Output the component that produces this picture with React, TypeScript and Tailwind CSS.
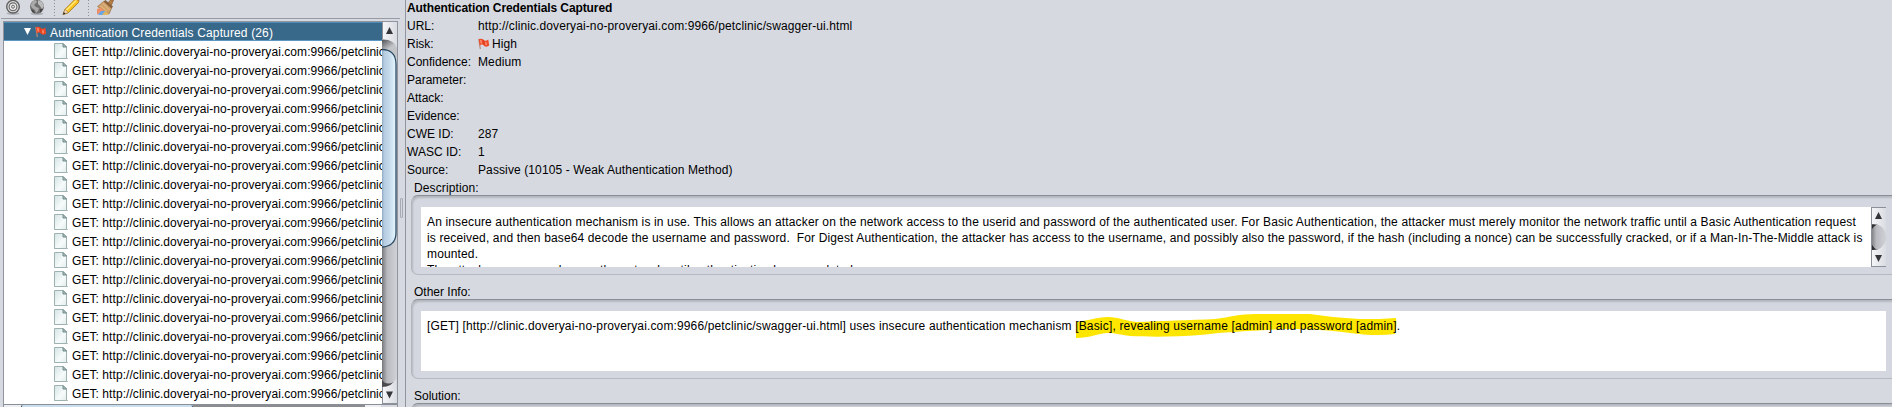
import React from "react";

const FONT = "font-['Liberation_Sans',Arial,sans-serif]";
const NODE = "GET: http://clinic.doveryai-no-proveryai.com:9966/petclinic";
const rows = Array.from({ length: 19 }, (_, i) => i);

const details: { label: string; value: string; flag?: boolean }[] = [
  { label: "URL:", value: "http://clinic.doveryai-no-proveryai.com:9966/petclinic/swagger-ui.html" },
  { label: "Risk:", value: "High", flag: true },
  { label: "Confidence:", value: "Medium" },
  { label: "Parameter:", value: "" },
  { label: "Attack:", value: "" },
  { label: "Evidence:", value: "" },
  { label: "CWE ID:", value: "287" },
  { label: "WASC ID:", value: "1" },
  { label: "Source:", value: "Passive (10105 - Weak Authentication Method)" },
];

function Flag() {
  return (
    <svg width="12" height="12" viewBox="0 0 12 12" className="shrink-0">
      <path d="M.8 .8L2.300 11" stroke="#b98a78" strokeWidth="1.200" />
      <path d="M.8 1.300C2.500 .3 4.200 .5 5.400 1.600L6.200 2.600C7.500 3 9 2.600 10.300 1.400L11.200 7.600C9.600 9 7.600 9 6.200 8L5.300 7C4 6.200 3 6.500 1.700 7.500Z" fill="#ee4a28" />
      <path d="M2.800 2L3.300 5.500M7.800 4.200L8.200 7.200" stroke="#ffa184" strokeWidth="1.200" />
      <path d="M5.500 2.200L6.100 7" stroke="#d23a1c" strokeWidth=".8" />
    </svg>
  );
}

function Page() {
  return (
    <svg width="14" height="17" viewBox="0 0 14 17" className="shrink-0">
      <defs>
        <linearGradient id="pg" x1="0" y1="0" x2="1" y2="1">
          <stop offset="0" stopColor="#d5e4e4" />
          <stop offset="0.6" stopColor="#f6fafa" />
          <stop offset="1" stopColor="#e2ecec" />
        </linearGradient>
      </defs>
      <path d="M0 15.5H14" stroke="#b9c2c2" />
      <path d="M.5 .5H9L12.5 4V15.5H.5Z" fill="url(#pg)" stroke="#9fb2b2" />
      <path d="M9 .5V4H12.5Z" fill="#b5c5c5" stroke="#6f8888" />
    </svg>
  );
}

function Toolbar() {
  return (
    <div className="ml-px flex h-[19px] w-[399px] items-start overflow-hidden border-b border-[#979ba5]">
      <svg width="130" height="18" viewBox="1 0 130 18">
        <ellipse cx="13" cy="13.500" rx="6.500" ry="1.500" fill="#aeb1b8" />
        <circle cx="13" cy="6.700" r="6.300" fill="#dedede" stroke="#606060" strokeWidth="1.400" />
        <circle cx="13" cy="6.700" r="3.900" fill="#ececec" stroke="#6c6c6c" strokeWidth="1.200" />
        <circle cx="13" cy="6.700" r="1.500" fill="#ddd" stroke="#6c6c6c" />
        <ellipse cx="37" cy="13.700" rx="6.500" ry="1.500" fill="#aeb1b8" />
        <circle cx="37" cy="6.700" r="7" fill="#6e6e6e" />
        <path d="M30.500 5L33 1L36 0L37 2L34 5L36 7L39 8L38 11L36 13L35 10L32 8Z" fill="#a9a9a9" />
        <path d="M38 0L42 2L44 6L42 9L40 6L38 4Z" fill="#bdbdbd" />
        <path d="M31 9L34 11L35 13.500L32 12ZM40 9L43 9L40 13Z" fill="#454545" />
        <path d="M54.500 0V16M88.500 0V16" stroke="#8c919c" strokeDasharray="1 2" />
        <path d="M63 14.500L64.800 9.500L74.300 0H79L78.500 2.500L68 13Z" fill="#f9c31f" stroke="#a87414" strokeWidth=".8" />
        <path d="M66.200 10.300L76.400 .2" stroke="#ffe97a" strokeWidth="1.500" />
        <path d="M63 14.500L65 9.300L68.300 12.600Z" fill="#f1d6b0" stroke="#8a6a40" strokeWidth=".5" />
        <path d="M63 14.500L63.800 12L65.500 13.700Z" fill="#222" />
        <path d="M107 4L110.500 0H113.500L112 4L110 6.500Z" fill="#b87f45" stroke="#805125" strokeWidth=".6" />
        <path d="M103.500 1.500L105.500 0L113 6.500L111.500 8.500Z" fill="#8a6038" />
        <path d="M97.500 6.500L103.500 1.500L111.500 8.500L109 14L104.500 12Z" fill="#cfa067" stroke="#93673a" strokeWidth=".6" />
        <path d="M100.500 5.500L107 11.500M103 3.500L109.500 10" stroke="#ecc894" strokeWidth=".8" />
        <path d="M97 9L101 7.500L103.500 10.500L100 13L97 14.500Z" fill="#f0906a" />
        <path d="M98 14.500L101 11L104.500 11L107 13L104.500 15H99Z" fill="#6ba6e4" />
        <path d="M102 14.800L105 11.500L109 14L107 15Z" fill="#e7b95d" />
      </svg>
    </div>
  );
}

function TreeScroll() {
  return (
    <svg width="15" height="382" viewBox="0 0 15 382" className="shrink-0">
      <defs>
        <linearGradient id="track" x1="0" x2="1" y1="0" y2="0">
          <stop offset="0" stopColor="#77787c" />
          <stop offset=".35" stopColor="#b9babf" />
          <stop offset="1" stopColor="#d0d2d8" />
        </linearGradient>
        <linearGradient id="thumb" x1="0" x2="1" y1="0" y2="0">
          <stop offset="0" stopColor="#8ca9c2" />
          <stop offset=".15" stopColor="#b5cbe0" />
          <stop offset=".5" stopColor="#c4d9eb" />
          <stop offset="1" stopColor="#e7f7ff" />
        </linearGradient>
        <linearGradient id="btn" x1="0" x2="1" y1="0" y2="0">
          <stop offset="0" stopColor="#f6f7f9" />
          <stop offset="1" stopColor="#d9dce1" />
        </linearGradient>
        <linearGradient id="shade" x1="0" x2=".6" y1="0" y2="1">
          <stop offset="0" stopColor="#4a4b4e" />
          <stop offset=".6" stopColor="#c3c4c8" />
        </linearGradient>
      </defs>
      <rect width="15" height="382" fill="url(#track)" />
      <rect y="17" width="15" height="18" fill="url(#shade)" />
      <path d="M0 0H15V26Q12 17 0 17.500Z" fill="url(#btn)" />
      <path d="M0 27.500C8 27.500 14 32 14 42V211C14 220 8 225 0 225Z" fill="url(#thumb)" />
      <path d="M0 27.500C8 27.500 14 32 14 42V211C14 220 8 225 0 225" fill="none" stroke="#2a4a64" strokeWidth="1.300" />
      <path d="M0 358Q4 364 12 360L8 365H0Z" fill="#4a4b4e" />
      <path d="M0 382V365Q10 365 14.500 356L15 382Z" fill="url(#btn)" />
      <path d="M.5 0V17M.5 365V382M0 381.500H15" stroke="#8b8f98" fill="none" />
      <path d="M4 12H11L7.500 5Z" fill="#333538" />
      <path d="M4 369.500H11L7.500 376.500Z" fill="#333538" />
    </svg>
  );
}

function DescScroll() {
  return (
    <svg width="15" height="60" viewBox="0 0 15 60" className="shrink-0">
      <rect width="15" height="60" fill="#e3e5e9" />
      <rect y="17" width="15" height="26" fill="url(#track)" />
      <path d="M0 17H8Q2 18 0 25ZM0 43H8Q2 42 0 35Z" fill="#2e2f31" />
      <path d="M0 0H15V27Q12 17 2 17.300H0Z" fill="url(#btn)" />
      <path d="M0 60V43H2Q12 43 15 33V60Z" fill="url(#btn)" />
      <path d="M.5 0V60M0 .5H15M0 59.500H15" stroke="#8b8f98" fill="none" />
      <path d="M4 12H11L7.500 5Z" fill="#333538" />
      <path d="M4 48H11L7.500 55Z" fill="#333538" />
    </svg>
  );
}

function Group({ children }: { children?: React.ReactNode }) {
  return (
    <div className="ml-[5px] h-[80px] w-[1500px] shrink-0 rounded-[7px] border border-x-[#b2b5bd] border-t-[#8a8d94] border-b-[#b5b8bf] bg-[#d4d7df] pt-[11px] pl-[9px] shadow-[inset_1px_2px_2px_#b4b7be]">
      {children}
    </div>
  );
}

export default function App() {
  return (
    <div className={`flex h-[407px] w-[1892px] overflow-hidden bg-[#d6d9e0] text-[12px] whitespace-pre text-black ${FONT}`}>
      <div className="flex w-[405px] shrink-0">
        <div className="flex w-[400px] flex-col">
          <Toolbar />
          <div className="mt-[2px] ml-[3px] flex h-[386px] w-[395px] flex-col border-x border-t border-[#8f949f] bg-white">
            <div className="flex h-[382px] shrink-0">
              <div className="w-[378px] shrink-0 overflow-hidden">
                <div className="flex h-[19px] items-center border-y border-t-[#4f8cb8] border-b-[#5d97c4] bg-[#39698a] pl-[20px] text-white">
                  <svg width="7" height="7" viewBox="0 0 7 7" className="mr-[4px]"><path d="M0 0H7L3.500 7Z" fill="#fff" /></svg>
                  <Flag />
                  <span className="ml-[3px] pt-[2px] leading-[16px] tracking-[0.14px]">Authentication Credentials Captured (26)</span>
                </div>
                <div className="pt-px">
                  {rows.map((r) => (
                    <div key={r} className="flex h-[19px] items-center pl-[50px]">
                      <Page />
                      <span className="ml-[4px] leading-[16px] tracking-[0.07px]">{NODE}</span>
                    </div>
                  ))}
                </div>
              </div>
              <TreeScroll />
            </div>
            <div className="flex h-[3px] shrink-0 border-t border-[#8b8f98] bg-[#d6d9e0]">
              <div className="w-[17px] bg-[#eceef1]" />
              <div className="w-[172px] rounded-t-[2px] border-x border-[#2a4a64] bg-[#c9dff0]" />
              <div className="w-[172px] bg-[#8c8d91]" />
              <div className="w-[16px] bg-[#eceef1]" />
            </div>
          </div>
        </div>
        <div className="mt-[198px] h-[20px] w-[3px] rounded-[1px] border border-[#a5a9b2]" />
      </div>
      <div className="flex w-[1487px] shrink-0 flex-col overflow-hidden border-l border-[#8f949f]">
        <div className="h-[17px] shrink-0 pl-px leading-[16px] font-bold tracking-[-0.1px]">Authentication Credentials Captured</div>
        {details.map((d) => (
          <div key={d.label} className="flex h-[18px] shrink-0 items-center pl-px leading-[16px] tracking-[0.108px]">
            <span className="w-[71px] tracking-normal">{d.label}</span>
            {d.flag && <span className="mr-[2px]"><Flag /></span>}
            <span>{d.value}</span>
          </div>
        ))}
        <div className="h-[16px] shrink-0 pl-[8px] leading-[19px] tracking-[0.12px]">Description:</div>
        <Group>
          <div className="flex h-[60px] w-[1465px] overflow-hidden bg-white">
            <div className="w-[1450px] shrink-0 pt-[7px] pl-[6px] leading-[16px] tracking-[0.139px]">
              <div>An insecure authentication mechanism is in use. This allows an attacker on the network access to the userid and password of the authenticated user. For Basic Authentication, the attacker must merely monitor the network traffic until a Basic Authentication request</div>
              <div>is received, and then base64 decode the username and password.  For Digest Authentication, the attacker has access to the username, and possibly also the password, if the hash (including a nonce) can be successfully cracked, or if a Man-In-The-Middle attack is</div>
              <div>mounted.</div>
              <div>The attacker can eavesdrop on the network until authentication has completed.</div>
            </div>
            <DescScroll />
          </div>
        </Group>
        <div className="h-[24px] shrink-0 pt-[8px] pl-[8px] leading-[19px]">Other Info:</div>
        <Group>
          <div className="h-[60px] w-[1465px] bg-white pt-[7px] pl-[6px] leading-[16px] tracking-[0.14px]">
            <span>[GET] [http://clinic.doveryai-no-proveryai.com:9966/petclinic/swagger-ui.html] uses insecure authentication mechanism </span>
            <span className="relative inline-block tracking-[0.18px]">
              <svg width="326" height="26" viewBox="0 0 326 26" className="absolute -top-[5px] left-0">
                <path d="M1 9C12 8 22 4 33 4C44 4 50 8 62 9C85 8 115 7 140 6C155 4 165 1 180 1H235C250 3 265 5 285 6C300 6 310 6 321 5Q322 13 320 21C305 23 290 22 275 20C260 18 240 16 215 16C185 17 150 19 125 22C100 24 75 24 55 23C45 22 42 20 32 20C20 21 15 25 1 25Z" fill="#ffe600" />
              </svg>
              <span className="relative">[Basic], revealing username [admin] and password [admin].</span>
            </span>
          </div>
        </Group>
        <div className="h-[24px] shrink-0 pt-[8px] pl-[8px] leading-[19px]">Solution:</div>
        <Group />
      </div>
    </div>
  );
}
